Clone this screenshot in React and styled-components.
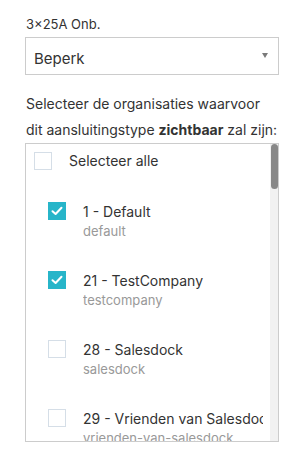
import React from "react";
import styled, { createGlobalStyle } from "styled-components";

const GlobalStyle = createGlobalStyle`
  html, body { margin: 0; padding: 0; background: #fff; }
  body { font-family: Inter, "Noto Sans", "Liberation Sans", sans-serif; color: #333; }
  * { box-sizing: border-box; }
`;

const Page = styled.div`
  width: 302px;
  padding: 15px 23px 0 25px;
`;

const Label = styled.div`
  font-size: 13px;
  line-height: 18px;
  color: #333;
  padding-left: 1px;
  margin-bottom: 4px;
`;

const Select = styled.div`
  height: 38px;
  border: 1px solid #cccccc;
  background: #fff;
  display: flex;
  align-items: center;
  padding: 4px 10px 0 8px;
  font-size: 15px;
  color: #333;
`;

const SelectValue = styled.span`
  flex: 1;
`;

const Caret = styled.span`
  width: 0;
  height: 0;
  border-left: 3.5px solid transparent;
  border-right: 3.5px solid transparent;
  border-top: 5px solid #7a7a7a;
  margin-bottom: 6px;
`;

const Intro = styled.p`
  margin: 16px 0 0;
  font-size: 14px;
  line-height: 26px;
  color: #333;
  padding-left: 1px;
  white-space: nowrap;
  b { font-weight: 700; }
`;

const ListBox = styled.div`
  height: 299px;
  border: 1px solid #cccccc;
  display: flex;
  overflow: hidden;
`;

const ListContent = styled.div`
  flex: 1;
  min-width: 0;
  overflow: hidden;
  padding: 7px 7px 20px 8px;
`;

const Track = styled.div`
  flex: none;
  width: 8px;
  background: #f1f1f1;
  padding: 0 0.5px;
`;

const Thumb = styled.div`
  height: 45px;
  border-radius: 4px;
  background: #888;
`;

const AllRow = styled.label`
  display: flex;
  align-items: center;
  gap: 17px;
  height: 20px;
  font-size: 14px;
  line-height: 20px;
`;

const Box = styled.span`
  flex: none;
  width: 18px;
  height: 18px;
  border: 1px solid ${(p) => (p.$checked ? "#27b5c9" : "#d5dee7")};
  background: ${(p) => (p.$checked ? "#27b5c9" : "#fff")};
  display: flex;
  align-items: center;
  justify-content: center;
`;

const Item = styled.label`
  display: flex;
  align-items: flex-start;
  gap: 17px;
  margin: 31px 0 0 14px;
`;

const ItemText = styled.div`
  flex: 1;
  min-width: 0;
  overflow: hidden;
  white-space: nowrap;
`;

const Title = styled.div`
  font-size: 14px;
  line-height: 20px;
  color: #333;
`;

const Sub = styled.div`
  font-size: 13px;
  line-height: 18px;
  color: #999;
`;

function Check({ checked }) {
  return (
    <Box $checked={checked}>
      {checked && (
        <svg width="14" height="14" viewBox="0 0 14 14">
          <polyline
            points="2.5,7.2 5.6,10 11.5,3.8"
            fill="none"
            stroke="#fff"
            strokeWidth="2"
            strokeLinecap="round"
            strokeLinejoin="round"
          />
        </svg>
      )}
    </Box>
  );
}

const orgs = [
  { id: 1, name: "Default", slug: "default", checked: true },
  { id: 21, name: "TestCompany", slug: "testcompany", checked: true },
  { id: 28, name: "Salesdock", slug: "salesdock", checked: false },
  { id: 29, name: "Vrienden van Salesdock", slug: "vrienden-van-salesdock", checked: false },
];

export default function App() {
  return (
    <>
      <GlobalStyle />
      <Page>
        <Label>3×25A Onb.</Label>
        <Select>
          <SelectValue>Beperk</SelectValue>
          <Caret />
        </Select>
        <Intro>
          Selecteer de organisaties waarvoor
          <br />
          dit aansluitingstype <b>zichtbaar</b> zal zijn:
        </Intro>
        <ListBox>
          <ListContent>
            <AllRow>
              <Check checked={false} />
              <span>Selecteer alle</span>
            </AllRow>
            {orgs.map((o) => (
              <Item key={o.id}>
                <Check checked={o.checked} />
                <ItemText>
                  <Title>
                    {o.id} - {o.name}
                  </Title>
                  <Sub>{o.slug}</Sub>
                </ItemText>
              </Item>
            ))}
          </ListContent>
          <Track>
            <Thumb />
          </Track>
        </ListBox>
      </Page>
    </>
  );
}
